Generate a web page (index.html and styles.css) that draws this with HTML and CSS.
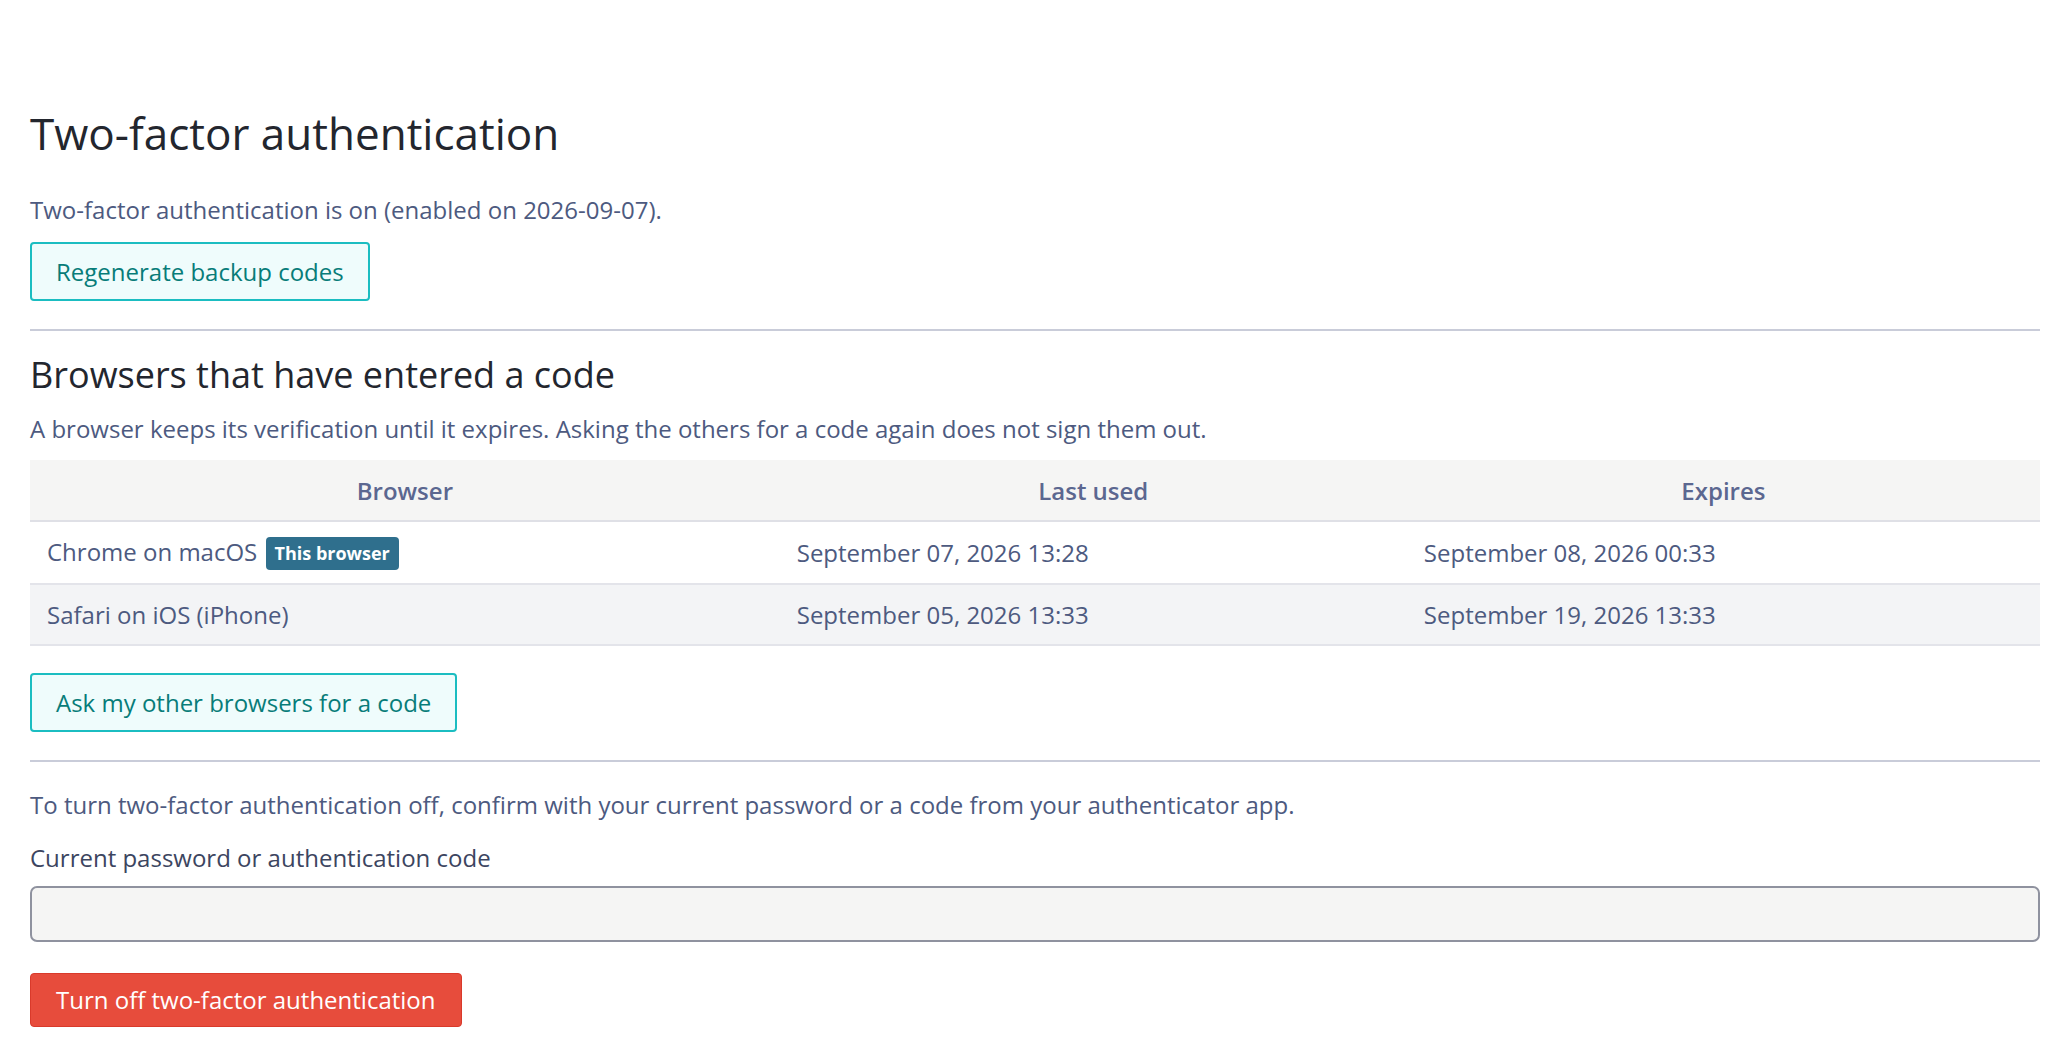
FILE: index.html
```html
<!DOCTYPE html>
<html lang="en">
<head>
  <meta charset="UTF-8">
  <title>Two-factor authentication</title>
  <link rel="stylesheet" href="styles.css">
</head>
<body>

<div class="page">

  <h1>Two-factor authentication</h1>
  <p class="status">Two-factor authentication is on (enabled on 2026-09-07).</p>
  <button class="btn btn-outline">Regenerate backup codes</button>

  <hr>

  <h2>Browsers that have entered a code</h2>
  <p class="hint">A browser keeps its verification until it expires. Asking the others for a code again does not sign them out.</p>

  <table class="browsers">
    <thead>
      <tr>
        <th class="col-browser">Browser</th>
        <th class="col-used">Last used</th>
        <th>Expires</th>
      </tr>
    </thead>
    <tbody>
      <tr>
        <td>Chrome on macOS <span class="badge">This browser</span></td>
        <td>September 07, 2026 13:28</td>
        <td>September 08, 2026 00:33</td>
      </tr>
      <tr>
        <td>Safari on iOS (iPhone)</td>
        <td>September 05, 2026 13:33</td>
        <td>September 19, 2026 13:33</td>
      </tr>
    </tbody>
  </table>

  <button class="btn btn-outline btn-ask">Ask my other browsers for a code</button>

  <hr>

  <p class="confirm">To turn two-factor authentication off, confirm with your current password or a code from your authenticator app.</p>

  <label class="field-label" for="otp">Current password or authentication code</label>
  <input type="password" id="otp" class="field">

  <button class="btn btn-danger">Turn off two-factor authentication</button>

</div>

</body>
</html>
```

FILE: styles.css
```css
body {
  margin: 0;
  font-family: 'Open Sans', 'Noto Sans', sans-serif;
  font-size: 24px;
  line-height: 33px;
  color: #4d5a80;
  background-color: #ffffff;
}

.page {
  padding: 107px 30px 30px;
}

h1 {
  margin: 0;
  font-size: 44px;
  font-weight: 400;
  line-height: 1.2;
  color: #23262e;
}

h2 {
  margin: 22px 0 0;
  font-size: 36px;
  font-weight: 400;
  line-height: 1.2;
  color: #23262e;
}

p {
  margin: 0;
}

.status {
  margin-top: 33px;
}

.hint {
  margin-top: 16px;
}

hr {
  border: none;
  border-top: 2px solid #c9ccd9;
  margin: 28px 0 0;
}

.btn {
  display: block;
  font-family: inherit;
  font-size: 24px;
  line-height: 35px;
  padding: 10px 24px;
  border-radius: 4px;
  cursor: pointer;
}

.btn-outline {
  margin-top: 16px;
  background-color: #effcfc;
  border: 2px solid #1bbdc1;
  color: #087c79;
}

.btn-ask {
  margin-top: 27px;
}

.btn-danger {
  margin-top: 31px;
  padding: 9px 25px;
  line-height: 34px;
  background-color: #e74c3c;
  border: 1px solid #d93a2b;
  color: white;
}

.browsers {
  width: 100%;
  margin-top: 15px;
  border-collapse: collapse;
}

.browsers th {
  background-color: #f5f5f4;
  font-weight: 600;
  color: #5b6790;
  text-align: center;
  padding: 14px 17px 13px;
  border-bottom: 2px solid #dfe0e6;
}

.browsers .col-browser {
  width: 37.3%;
}

.browsers .col-used {
  width: 31.2%;
}

.browsers td {
  padding: 13px 17px;
  border-bottom: 2px solid #e3e4ea;
  vertical-align: middle;
}

.browsers tbody tr:nth-child(even) td {
  background-color: #f3f4f6;
}

.badge {
  display: inline-block;
  vertical-align: 1px;
  margin-left: 2px;
  padding: 0 9px;
  line-height: 33px;
  border-radius: 4px;
  background-color: #2f6f8d;
  color: white;
  font-size: 18px;
  font-weight: 700;
}

.confirm {
  margin-top: 26px;
}

.field-label {
  display: block;
  margin-top: 20px;
  color: #3c4560;
}

.field {
  display: block;
  box-sizing: border-box;
  width: 100%;
  height: 56px;
  margin-top: 12px;
  padding: 8px 14px;
  font-family: inherit;
  font-size: 24px;
  background-color: #f5f5f4;
  border: 2px solid #8f929f;
  border-radius: 7px;
}
```
